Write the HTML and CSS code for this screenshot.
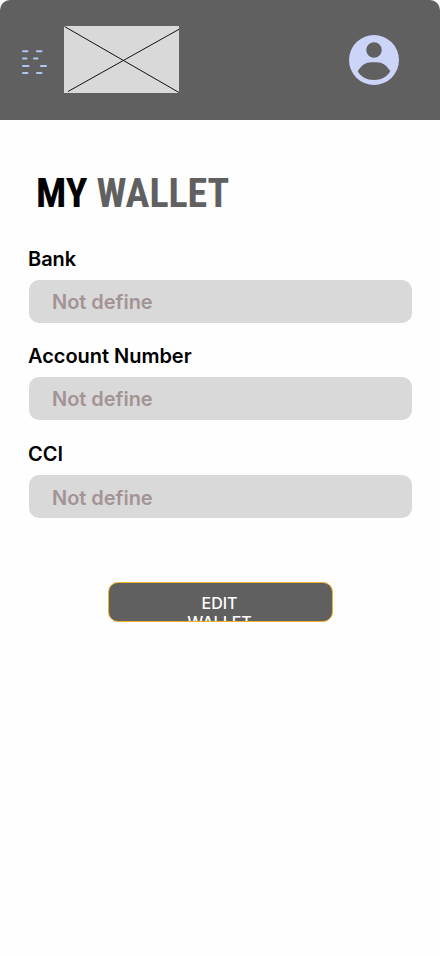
FILE: index.html
```html
<!DOCTYPE html>
<html lang="en">
<head>
<meta charset="utf-8">
<title>My Wallet</title>
<link rel="stylesheet" href="styles.css">
</head>
<body>
<header class="topbar">
  <svg class="menu" width="26" height="26" viewBox="0 0 26 26" fill="none" stroke="#b0c6f0" stroke-width="2" stroke-linecap="round">
    <path d="M2 2.3h4.500M16 2.3h4.500M2 9.600h3.500M13 9.600h3.500M2 17h5.500M20 17h5M2 24.100h4.500M16 24.100h4.500"/>
  </svg>
  <svg class="logo" width="115" height="67" viewBox="0 0 115 67" stroke="#111" stroke-width="1">
    <path fill="#d9d9d9" stroke="none" d="M0 0h115v67H0z"/>
    <path d="M.5 .5L115 66.5M4 65.5L115 3.3"/>
  </svg>
  <svg class="avatar" width="50" height="50" viewBox="2 2 20 20" fill="#ccd4f8">
    <path d="M12 2a10 10 0 1 0 0 20a10 10 0 0 0 0-20zM12 4.9a3.1 3.1 0 1 1 0 6.2a3.1 3.1 0 0 1 0-6.2zM12 20c-2.8 0-5.300-1.300-6.500-3.500C6.800 14.100 8.800 12.850 11 12.850h2c2.200 0 4.200 1.250 5.500 3.650C17.300 18.700 14.800 20 12 20z"/>
  </svg>
</header>
<main class="content">
  <h1 class="title">MY <span class="title-accent">WALLET</span></h1>
  <section class="field">
    <h2 class="label">Bank</h2>
    <div class="value">Not define</div>
  </section>
  <section class="field">
    <h2 class="label">Account Number</h2>
    <div class="value">Not define</div>
  </section>
  <section class="field field-last">
    <h2 class="label">CCI</h2>
    <div class="value">Not define</div>
  </section>
  <button class="edit"><span class="edit-text">EDIT WALLET</span></button>
</main>
</body>
</html>
```
FILE: styles.css
```css
* { box-sizing: border-box; }
body { margin: 0; min-height: 956px; background: #fefefe; font-family: Inter, sans-serif; }
.topbar { display: flex; height: 120px; background: #606060; border-radius: 10px 10px 0 0; }
.menu { margin: 49px 0 0 21px; }
.logo { margin: 26px 0 0 17px; }
.avatar { margin: 35px 41px 0 auto; }
.content { padding: 50px 28px 0 29px; }
.title { margin: 0 0 29px 7px; font: 680 40px/47px Roboto, sans-serif; font-stretch: 75%; letter-spacing: -0.07px; color: #000; }
.title-accent { color: #606060; }
.field { height: 97px; padding-top: 1px; }
.label { margin: 0 0 9px -1px; font-size: 20px; font-weight: 590; line-height: 24px; letter-spacing: -0.03px; color: #000; }
.value { height: 43px; padding-left: 23px; border-radius: 10px; background: #d9d9d9; color: #a39494; font-size: 20px; font-weight: 600; line-height: 44px; letter-spacing: -0.03px; }
.field-last { margin-top: 1px; }
.field-last .value { line-height: 46px; }
.edit { display: block; width: 225px; height: 40px; margin: 44px 0 0 79px; padding: 11px 0 0; border: 1px solid #edb52b; border-radius: 10px; overflow: hidden; background: #606060; color: #fff; font: 530 16px/19px Inter, sans-serif; }
.edit-text { display: block; width: 81px; height: 28px; margin-left: 70px; text-align: center; }
```
